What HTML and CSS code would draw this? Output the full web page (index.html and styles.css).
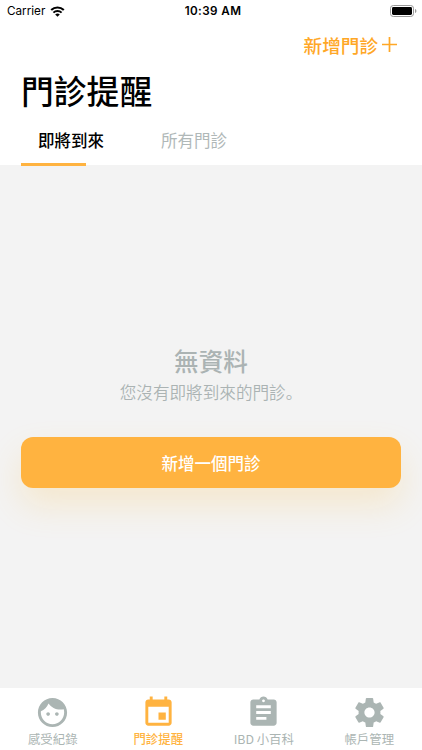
FILE: index.html
```html
<!DOCTYPE html>
<html lang="zh-Hant">
<head>
    <meta charset="UTF-8">
    <meta name="viewport" content="width=device-width, initial-scale=1.0">
    <title>門診提醒</title>
    <link rel="stylesheet" href="styles.css">
</head>
<body>
    <header class="header">
        <div class="status-bar">
            <div class="status-left">
                <span>Carrier</span>
                <svg class="wifi" viewBox="0 0 15 11">
                    <path d="M1.2 4.1a9 9 0 0 1 12.6 0" fill="none" stroke="#000" stroke-width="2.1"/>
                    <path d="M3.4 6.700a5.800 5.800 0 0 1 8.200 0" fill="none" stroke="#000" stroke-width="1.9"/>
                    <path d="M5.2 8.5a3.3 3.3 0 0 1 4.6 0L7.5 10.8z"/>
                </svg>
            </div>
            <span class="status-time">10:39 AM</span>
            <svg class="battery" viewBox="0 0 27 12">
                <rect x="0.5" y="0.5" width="23" height="11" rx="2.8" fill="none" stroke="#999"/>
                <rect x="2" y="2" width="20" height="8" rx="1.4"/>
                <path d="M25 4v4c.9-.3 1.4-1.1 1.4-2S25.900 4.300 25 4z" fill="#999"/>
            </svg>
        </div>
        <div class="nav-bar">
            <button class="add-link">
                <span>新增門診</span>
                <svg class="plus" viewBox="0 0 14 14"><path d="M7 0v14M0 7h14" stroke="#ffa726" stroke-width="1.6"/></svg>
            </button>
        </div>
        <h1>門診提醒</h1>
        <nav class="tabs">
            <a class="tab active">即將到來</a>
            <a class="tab">所有門診</a>
        </nav>
    </header>

    <main class="content">
        <h2>無資料</h2>
        <p>您沒有即將到來的門診<span class="stop" lang="zh-Hans">。</span></p>
        <button class="btn-primary">新增一個門診</button>
    </main>

    <footer class="tab-bar">
        <a class="tab-item">
            <svg viewBox="0 0 24 24"><path d="M9 11.750c-.69 0-1.250.560-1.250 1.250s.560 1.250 1.250 1.250 1.250-.560 1.250-1.250-.560-1.250-1.250-1.250zm6 0c-.69 0-1.250.560-1.250 1.250s.560 1.250 1.250 1.250 1.250-.560 1.250-1.250-.560-1.250-1.250-1.250zM12 2C6.480 2 2 6.480 2 12s4.480 10 10 10 10-4.480 10-10S17.520 2 12 2zm0 18c-4.410 0-8-3.590-8-8 0-.290.020-.580.050-.860 2.360-1.050 4.230-2.980 5.210-5.370C11.070 8.330 14.050 10 17.420 10c.780 0 1.530-.090 2.250-.260.210.710.330 1.470.330 2.260 0 4.410-3.590 8-8 8z"/></svg>
            <span>感受紀錄</span>
        </a>
        <a class="tab-item active">
            <svg viewBox="0 0 24 24"><path d="M17 12h-5v5h5v-5zM16 1v2H8V1H6v2H5c-1.110 0-1.990.900-1.990 2L3 19c0 1.100.890 2 2 2h14c1.100 0 2-.900 2-2V5c0-1.100-.900-2-2-2h-1V1h-2zm3 18H5V8h14v11z"/></svg>
            <span>門診提醒</span>
        </a>
        <a class="tab-item">
            <svg viewBox="0 0 24 24"><path d="M19 3h-4.180C14.400 1.840 13.300 1 12 1c-1.300 0-2.400.840-2.820 2H5c-1.100 0-2 .900-2 2v14c0 1.100.900 2 2 2h14c1.100 0 2-.900 2-2V5c0-1.100-.900-2-2-2zm-7 0c.550 0 1 .450 1 1s-.450 1-1 1-1-.450-1-1 .450-1 1-1zm2 14H7v-2h7v2zm3-4H7v-2h10v2zm0-4H7V7h10v2z"/></svg>
            <span>IBD 小百科</span>
        </a>
        <a class="tab-item">
            <svg viewBox="0 0 24 24"><path d="M19.430 12.980c.040-.320.070-.640.070-.980s-.030-.660-.070-.980l2.110-1.650c.190-.150.240-.420.120-.640l-2-3.460c-.120-.220-.390-.300-.610-.220l-2.490 1c-.520-.400-1.080-.730-1.690-.980l-.380-2.650C14.460 2.180 14.250 2 14 2h-4c-.250 0-.460.180-.490.420l-.380 2.650c-.610.250-1.170.590-1.690.980l-2.490-1c-.230-.090-.490 0-.610.220l-2 3.460c-.130.220-.070.490.120.640l2.110 1.650c-.040.320-.070.650-.070.980s.030.660.070.980l-2.110 1.650c-.190.150-.240.420-.120.640l2 3.460c.120.220.390.300.610.220l2.490-1c.520.400 1.080.730 1.690.980l.380 2.650c.030.240.240.420.490.420h4c.250 0 .460-.180.490-.420l.380-2.650c.610-.250 1.170-.590 1.690-.980l2.490 1c.230.090.490 0 .610-.220l2-3.460c.120-.220.070-.490-.120-.640l-2.110-1.650zM12 15.500c-1.930 0-3.500-1.570-3.500-3.500s1.570-3.500 3.500-3.500 3.500 1.570 3.500 3.500-1.570 3.500-3.500 3.500z"/></svg>
            <span>帳戶管理</span>
        </a>
    </footer>
</body>
</html>
```

FILE: styles.css
```css
* {
    box-sizing: border-box;
}

body {
    display: flex;
    flex-direction: column;
    height: 100vh;
    margin: 0;
    overflow: hidden;
    background: #f3f3f3;
    color: #000;
    font-family: 'Noto Sans CJK TC', sans-serif;
}

h1, h2, p {
    margin: 0;
}

button {
    padding: 0;
    border: none;
    background: none;
    font-family: inherit;
}

.header {
    height: 165px;
    background: #fff;
}

.status-bar {
    display: grid;
    grid-template-columns: 1fr auto 1fr;
    align-items: center;
    height: 22px;
    padding: 0 5px 0 7px;
    font-family: Inter, sans-serif;
    font-size: 11.7px;
}

.status-left {
    display: flex;
    align-items: center;
    gap: 5px;
}

.wifi {
    width: 15px;
    height: 11px;
}

.status-time {
    padding-left: 2px;
    font-weight: 600;
    letter-spacing: 0.4px;
}

.battery {
    width: 27px;
    height: 12px;
    justify-self: end;
}

.nav-bar {
    display: flex;
    justify-content: flex-end;
    height: 46px;
    padding: 0 25px 2px 0;
}

.add-link {
    display: flex;
    align-items: center;
    gap: 4px;
    color: #ffa726;
    font-size: 18.6px;
    font-weight: 500;
}

.plus {
    width: 15px;
    height: 15px;
}

h1 {
    padding-left: 21px;
    font-size: 32.8px;
    font-weight: 500;
    line-height: 44px;
}

.tabs {
    display: flex;
    gap: 40px;
    height: 54px;
    padding-left: 21px;
}

.tab {
    height: 54px;
    padding-left: 17px;
    color: #b0b8b8;
    font-size: 16.5px;
    line-height: 56px;
}

.tab.active {
    color: #000;
    font-weight: 500;
    background: linear-gradient(#ffb340, #ffb340) left bottom / 65px 3px no-repeat;
}

.content {
    display: flex;
    flex: 1;
    flex-direction: column;
    align-items: center;
    padding: 178px 21px 0;
    color: #abb3b3;
}

.content h2 {
    font-size: 24.6px;
    font-weight: 500;
    line-height: 34px;
}

.content p {
    font-size: 16.6px;
    font-weight: 350;
    line-height: 30px;
}

.content .stop {
    font-family: 'Noto Sans CJK SC', sans-serif;
}

.btn-primary {
    width: 100%;
    height: 51px;
    margin-top: 30px;
    border-radius: 12px;
    background: #ffb340;
    box-shadow: 0 17px 34px rgba(255, 190, 60, 0.2);
    color: #fff;
    font-size: 16.5px;
    font-weight: 500;
}

.tab-bar {
    display: grid;
    grid-template-columns: repeat(4, 1fr);
    height: 62px;
    background: #fff;
}

.tab-item {
    display: flex;
    flex-direction: column;
    align-items: center;
    padding-top: 7px;
    color: #abb5b3;
    font-size: 12.4px;
    line-height: 18px;
}

.tab-item svg {
    width: 35px;
    height: 35px;
    fill: currentColor;
}

.tab-item.active {
    color: #ffb340;
    font-weight: 500;
}
```
